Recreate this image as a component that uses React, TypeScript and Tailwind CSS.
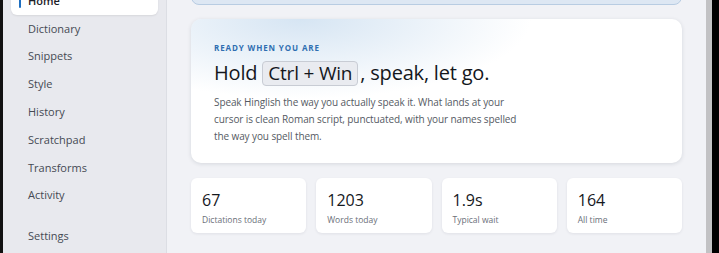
import React from "react";

const navItems = [
  "Dictionary",
  "Snippets",
  "Style",
  "History",
  "Scratchpad",
  "Transforms",
  "Activity",
];

const stats = [
  { value: "67", label: "Dictations today" },
  { value: "1203", label: "Words today" },
  { value: "1.9s", label: "Typical wait" },
  { value: "164", label: "All time" },
];

function Sidebar() {
  return (
    <aside className="w-[164px] shrink-0 bg-[#e8e9ee] border-r border-[#dcdee4] px-[8px]">
      <nav className="-mt-[13px] flex flex-col">
        <div className="relative flex h-[28px] items-center rounded-md bg-white pl-[17px] text-[11px] font-semibold text-[#1d2027] shadow-[0_1px_2px_rgba(0,0,0,0.08)]">
          <span className="absolute left-[8px] top-[7px] h-[14px] w-[2px] rounded-full bg-[#1f6fc0]" />
          Home
        </div>
        {navItems.map((item) => (
          <div
            key={item}
            className="flex h-[27.8px] items-center pl-[17px] text-[11px] font-medium text-[#454953]"
          >
            {item}
          </div>
        ))}
        <div className="h-[13px]" />
        <div className="flex h-[28px] items-center pl-[17px] text-[11px] font-medium text-[#454953]">
          Settings
        </div>
      </nav>
    </aside>
  );
}

function Hero() {
  return (
    <section className="relative overflow-hidden rounded-[10px] bg-white shadow-[0_1px_4px_rgba(20,30,50,0.12)]">
      <div className="absolute inset-0 bg-[radial-gradient(ellipse_230px_80px_at_110px_0px,#d6e5f3,rgba(255,255,255,0))]" />
      <div className="relative px-[23px] pb-[18px] pt-[23px]">
        <div className="text-[8px] font-bold tracking-[0.11em] text-[#2f6eb1]">
          READY WHEN YOU ARE
        </div>
        <h1 className="mt-[5px] flex items-center text-[20px] font-medium leading-[28px] tracking-[-0.2px] text-[#14171c]">
          Hold
          <kbd className="ml-[5px] mr-[2px] rounded-[4px] border border-[#c8ccd4] bg-[#e9ebf0] px-[5px] font-[inherit] text-[19px] leading-[23px]">
            Ctrl + Win
          </kbd>
          , speak, let go.
        </h1>
        <p className="mt-[7px] w-[306px] text-[10px] leading-[17px] tracking-[-0.1px] text-[#555a63]">
          Speak Hinglish the way you actually speak it. What lands at your
          cursor is clean Roman script, punctuated, with your names spelled
          the way you spell them.
        </p>
      </div>
    </section>
  );
}

export default function App() {
  return (
    <div
      className="flex h-[253px] w-[719px] overflow-hidden bg-black"
      style={{ fontFamily: '"Open Sans", "Noto Sans", sans-serif' }}
    >
      <div className="w-[3px] shrink-0 bg-[#111]" />
      <Sidebar />
      <main className="flex-1 bg-[#f1f2f6] px-[24px]">
        <div className="-mt-[10px] h-[15px] rounded-b-[8px] border border-[#b8cce2] bg-[#dde7f3]" />
        <div className="mt-[14px]">
          <Hero />
        </div>
        <div className="mt-[15px] grid grid-cols-4 gap-[10px]">
          {stats.map((s) => (
            <div
              key={s.label}
              className="h-[55px] rounded-[6px] bg-white px-[11px] pt-[12px] shadow-[0_1px_3px_rgba(20,30,50,0.08)]"
            >
              <div className="text-[16px] font-medium leading-[20px] text-[#15181d]">
                {s.value}
              </div>
              <div className="mt-[3px] text-[8.5px] leading-[13px] text-[#6b6f79]">
                {s.label}
              </div>
            </div>
          ))}
        </div>
      </main>
      <div className="w-[6px] shrink-0 bg-[#c2c2c4]" />
      <div className="w-[7px] shrink-0 bg-black" />
    </div>
  );
}
